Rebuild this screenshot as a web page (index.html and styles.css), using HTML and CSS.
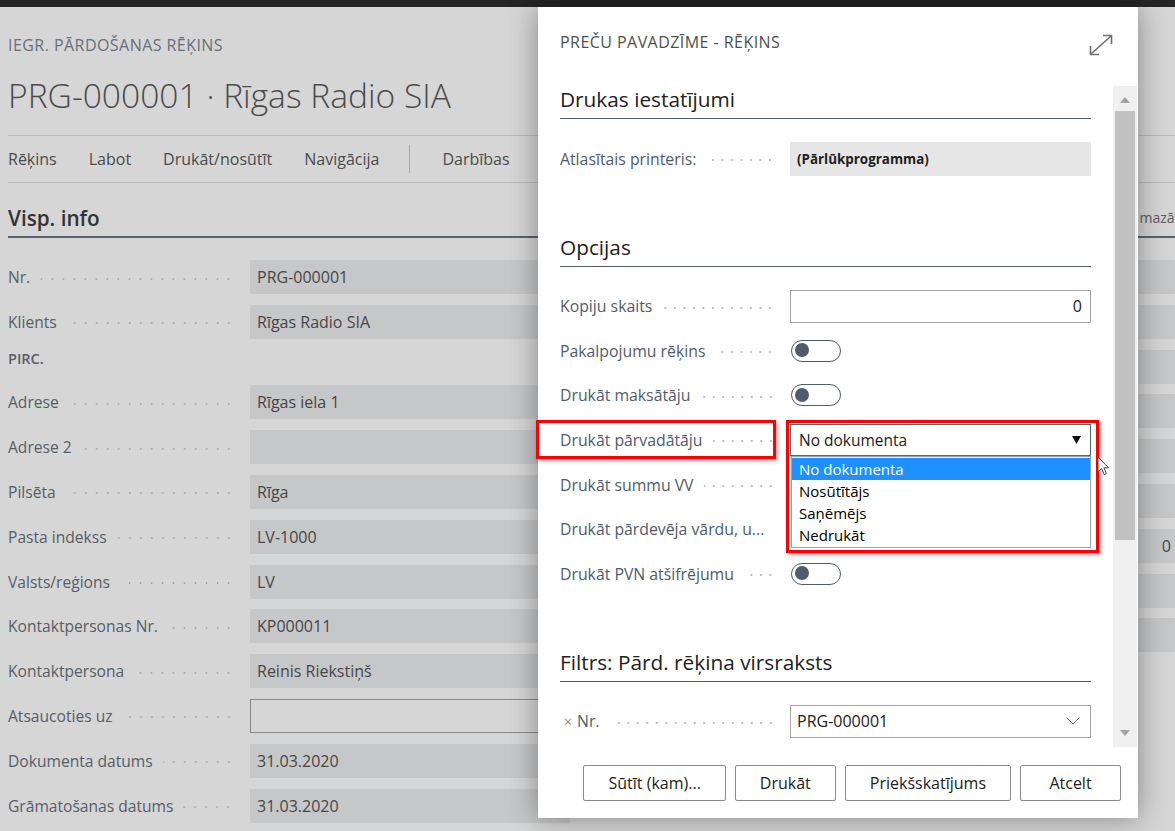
FILE: index.html
```html
<!DOCTYPE html>
<html lang="lv">
<head>
<meta charset="utf-8">
<title>Preču pavadzīme - rēķins</title>
<link rel="stylesheet" href="styles.css">
</head>
<body>
<div class="topbar"></div>
<main class="page">
  <div class="page-caption">IEGR. PĀRDOŠANAS RĒĶINS</div>
  <h1 class="page-title">PRG-000001 · Rīgas Radio SIA</h1>
  <nav class="menu">
    <span class="menu-item">Rēķins</span>
    <span class="menu-item">Labot</span>
    <span class="menu-item">Drukāt/nosūtīt</span>
    <span class="menu-item">Navigācija</span>
    <span class="menu-sep"></span>
    <span class="menu-item">Darbības</span>
  </nav>
  <section class="fasttab">
    <div class="fasttab-head">
      <h2 class="fasttab-title">Visp. info</h2>
      <span class="show-less">Rādīt mazāk</span>
    </div>
    <div class="fasttab-body">
      <div class="col">
        <div class="frow"><span class="flabel"><span>Nr.</span><i class="fdots"></i></span><span class="fval">PRG-000001</span></div>
        <div class="frow"><span class="flabel"><span>Klients</span><i class="fdots"></i></span><span class="fval">Rīgas Radio SIA</span></div>
        <div class="fcaption">PIRC.</div>
        <div class="frow"><span class="flabel"><span>Adrese</span><i class="fdots"></i></span><span class="fval">Rīgas iela 1</span></div>
        <div class="frow"><span class="flabel"><span>Adrese 2</span><i class="fdots"></i></span><span class="fval"></span></div>
        <div class="frow"><span class="flabel"><span>Pilsēta</span><i class="fdots"></i></span><span class="fval">Rīga</span></div>
        <div class="frow"><span class="flabel"><span>Pasta indekss</span><i class="fdots"></i></span><span class="fval">LV-1000</span></div>
        <div class="frow"><span class="flabel"><span>Valsts/reģions</span><i class="fdots"></i></span><span class="fval">LV</span></div>
        <div class="frow"><span class="flabel"><span>Kontaktpersonas Nr.</span><i class="fdots"></i></span><span class="fval">KP000011</span></div>
        <div class="frow"><span class="flabel"><span>Kontaktpersona</span><i class="fdots"></i></span><span class="fval">Reinis Riekstiņš</span></div>
        <div class="frow"><span class="flabel"><span>Atsaucoties uz</span><i class="fdots"></i></span><span class="fval fval-edit"></span></div>
        <div class="frow"><span class="flabel"><span>Dokumenta datums</span><i class="fdots"></i></span><span class="fval">31.03.2020</span></div>
        <div class="frow"><span class="flabel"><span>Grāmatošanas datums</span><i class="fdots"></i></span><span class="fval">31.03.2020</span></div>
      </div>
      <div class="col col-right">
        <div class="frow"><span class="fval"></span></div>
        <div class="frow"><span class="fval"></span></div>
        <div class="frow"><span class="fval"></span></div>
        <div class="frow"><span class="fval"></span></div>
        <div class="frow"><span class="fval"></span></div>
        <div class="frow"><span class="fval"></span></div>
        <div class="frow"><span class="fval fval-num">0</span></div>
        <div class="frow"><span class="fval"></span></div>
        <div class="frow"><span class="fval"></span></div>
      </div>
    </div>
  </section>
</main>

<div class="overlay"></div>

<div class="dialog">
  <div class="dlg-head">
    <div class="dlg-title">PREČU PAVADZĪME - RĒĶINS</div>
    <svg class="expand" width="26" height="24" viewBox="0 0 26 24" aria-hidden="true">
      <path d="M3 21 L23 3" />
      <path d="M15 2.5 L23.5 2.5 L23.5 11" />
      <path d="M2.5 13 L2.5 21.5 L11 21.5" />
    </svg>
  </div>
  <div class="dlg-body">
    <div class="dlg-content">
      <section class="dsec dsec-first">
        <h3 class="dsec-title">Drukas iestatījumi</h3>
        <div class="drows">
          <div class="drow">
            <span class="dlabel"><span class="dtext">Atlasītais printeris:</span><i class="ddots"></i></span>
            <span class="dfield dfield-static">(Pārlūkprogramma)</span>
          </div>
        </div>
      </section>
      <section class="dsec">
        <h3 class="dsec-title">Opcijas</h3>
        <div class="drows">
          <div class="drow">
            <span class="dlabel"><span class="dtext">Kopiju skaits</span><i class="ddots"></i></span>
            <span class="dfield dfield-input">0</span>
          </div>
          <div class="drow">
            <span class="dlabel"><span class="dtext">Pakalpojumu rēķins</span><i class="ddots"></i></span>
            <span class="toggle"></span>
          </div>
          <div class="drow">
            <span class="dlabel"><span class="dtext">Drukāt maksātāju</span><i class="ddots"></i></span>
            <span class="toggle"></span>
          </div>
          <div class="drow drow-open">
            <span class="dlabel"><span class="dtext">Drukāt pārvadātāju</span><i class="ddots"></i></span>
            <span class="dselect">
              <span>No dokumenta</span>
              <svg class="dselect-arrow" width="9" height="8" viewBox="0 0 9 8"><path d="M0 0 H9 L4.5 8 Z"/></svg>
            </span>
            <ul class="dlist">
              <li class="dopt dopt-active">No dokumenta</li>
              <li class="dopt">Nosūtītājs</li>
              <li class="dopt">Saņēmējs</li>
              <li class="dopt">Nedrukāt</li>
            </ul>
          </div>
          <div class="drow">
            <span class="dlabel"><span class="dtext">Drukāt summu VV</span><i class="ddots"></i></span>
            <span class="toggle"></span>
          </div>
          <div class="drow">
            <span class="dlabel"><span class="dtext">Drukāt pārdevēja vārdu, u...</span><i class="ddots"></i></span>
            <span class="toggle"></span>
          </div>
          <div class="drow">
            <span class="dlabel"><span class="dtext">Drukāt PVN atšifrējumu</span><i class="ddots"></i></span>
            <span class="toggle"></span>
          </div>
        </div>
      </section>
      <section class="dsec">
        <h3 class="dsec-title">Filtrs: Pārd. rēķina virsraksts</h3>
        <div class="drows">
          <div class="drow">
            <span class="dlabel"><span class="dx">×</span><span class="dtext">Nr.</span><i class="ddots"></i></span>
            <span class="dfield dfield-input dfield-combo">
              <span>PRG-000001</span>
              <svg class="chev" width="14" height="8" viewBox="0 0 14 8"><path d="M0.5 0.5 L7 7 L13.5 0.5"/></svg>
            </span>
          </div>
        </div>
      </section>
    </div>
    <div class="scrollbar">
      <svg class="sb-arrow" width="10" height="6" viewBox="0 0 10 6"><path d="M0 6 L5 0 L10 6 Z"/></svg>
      <div class="sb-thumb"></div>
      <div class="sb-rest"></div>
      <svg class="sb-arrow" width="10" height="6" viewBox="0 0 10 6"><path d="M0 0 L10 0 L5 6 Z"/></svg>
    </div>
  </div>
  <div class="dlg-foot">
    <button class="btn">Sūtīt (kam)...</button>
    <button class="btn">Drukāt</button>
    <button class="btn">Priekšskatījums</button>
    <button class="btn">Atcelt</button>
  </div>
</div>

<div class="mark mark-label"></div>
<div class="mark mark-select"></div>
<svg class="cursor" width="13" height="21" viewBox="0 0 13 21" aria-hidden="true">
  <path d="M1 1 L1 16 L4.6 12.6 L7.2 18.6 L9.4 17.6 L6.9 11.8 L11.6 11.8 Z"/>
</svg>
</body>
</html>
```

FILE: styles.css
```css
* { box-sizing: border-box; }
html, body { margin: 0; }
body {
  width: 1175px;
  height: 831px;
  overflow: hidden;
  position: relative;
  background: #fff;
  font-family: "Segoe UI", "Open Sans", "Noto Sans", sans-serif;
  color: #212121;
}

/* ---------- background page ---------- */
.topbar { height: 7px; background: #2d2d2d; }
.page { width: 1204px; padding-left: 8px; }
.page-caption {
  margin-top: 28px;
  height: 20px;
  line-height: 20px;
  font-size: 16px;
  letter-spacing: 0.45px;
  color: #7b8594;
}
.page-title {
  margin: 18px 0 0;
  height: 44px;
  line-height: 44px;
  font-size: 33.6px;
  font-weight: 300;
  color: #5a5a5a;
}
.menu {
  margin-top: 18px;
  height: 48px;
  border-top: 1px solid #e1e1e1;
  border-bottom: 1px solid #e1e1e1;
  display: flex;
  align-items: center;
  gap: 32px;
  font-size: 16px;
  color: #5a5a5a;
}
.menu-sep { width: 1px; height: 28px; background: #c8c8c8; margin: 0 0 0 -2px; }
.fasttab-head {
  display: flex;
  justify-content: space-between;
  align-items: center;
  height: 55px;
  padding-top: 16px;
  border-bottom: 2px solid #6c7584;
}
.fasttab-title { margin: 0; font-size: 20.7px; font-weight: 600; color: #3d3d3d; }
.show-less { font-size: 14px; color: #6a717b; margin-right: 22px; }
.fasttab-body {
  display: grid;
  grid-template-columns: 562px 594px;
  column-gap: 40px;
  padding-top: 22px;
}
.col { display: flex; flex-direction: column; gap: 10.8px; }
.frow { display: flex; align-items: center; height: 34px; }
.flabel {
  flex: 0 0 242px;
  display: flex;
  align-items: center;
  font-size: 15.6px;
  color: #6a717b;
  white-space: nowrap;
}
.fdots {
  flex: 1;
  height: 4px;
  margin: 3px 16px 0 10px;
  background-image: radial-gradient(circle, #c3c3c3 0.8px, transparent 1.2px);
  background-size: 11px 4px;
  background-repeat: repeat-x;
  background-position: right center;
}
.fval {
  flex: 1;
  height: 34px;
  line-height: 34px;
  padding: 0 7px;
  background: #ecedef;
  font-size: 16px;
  color: #555;
}
.fval-edit { background: #fff; border: 1px solid #a6a6a6; }
.fval-num { text-align: right; padding-right: 33px; }
.fcaption {
  height: 25px;
  line-height: 18px;
  font-size: 14.5px;
  font-weight: 600;
  color: #6a6f78;
}
.col-right .frow { padding-left: 242px; }

/* ---------- overlay ---------- */
.overlay {
  position: absolute;
  inset: 0;
  background: rgba(0, 0, 0, 0.16);
}

/* ---------- dialog ---------- */
.dialog {
  position: absolute;
  left: 538px;
  top: 7px;
  width: 600px;
  height: 811px;
  background: #fff;
  box-shadow: 0 0 28px rgba(0, 0, 0, 0.38);
  display: flex;
  flex-direction: column;
}
.dlg-head {
  height: 79px;
  display: flex;
  justify-content: space-between;
  align-items: flex-start;
  padding: 25px 24px 0 22px;
}
.dlg-title {
  line-height: 20px;
  font-size: 16px;
  letter-spacing: 0.45px;
  color: #505050;
}
.expand { margin-top: 1px; fill: none; stroke: #707070; stroke-width: 1.6; }

.dlg-body { height: 661px; display: flex; }
.dlg-content {
  width: 575px;
  padding: 0 22px;
  overflow: hidden;
}
.dsec { margin-top: 58px; }
.dsec-first { margin-top: 0; }
.dsec-title {
  margin: 0;
  height: 33px;
  line-height: 27px;
  padding-bottom: 5px;
  border-bottom: 1px solid #505c6d;
  font-size: 20.8px;
  font-weight: 400;
  color: #212121;
}
.drows {
  padding-top: 22.5px;
  display: flex;
  flex-direction: column;
  gap: 10.67px;
}
.drow {
  position: relative;
  display: flex;
  align-items: center;
  height: 34px;
  gap: 15px;
}
.dlabel {
  flex: 0 0 215px;
  display: flex;
  align-items: center;
  font-size: 15.8px;
  color: #505c6d;
  white-space: nowrap;
}
.dx { font-size: 14px; color: #8a8a8a; margin: 0 5px 0 4px; }
.ddots {
  flex: 1;
  height: 4px;
  margin: 3px 0 0 10px;
  background-image: radial-gradient(circle, #bdbdbd 0.8px, transparent 1.2px);
  background-size: 9.5px 4px;
  background-repeat: repeat-x;
  background-position: right center;
}
.dfield {
  flex: 1;
  height: 34px;
  display: flex;
  align-items: center;
  padding: 0 7px;
  font-size: 16px;
  color: #212121;
}
.dfield-static { background: #e6e6e6; font-size: 13.4px; font-weight: 700; }
.dfield-input { border: 1px solid #a6a6a6; justify-content: flex-end; padding-right: 8px; height: 33px; }
.dfield-combo { justify-content: space-between; padding-left: 6px; padding-right: 10px; }
.chev { fill: none; stroke: #777; stroke-width: 1; }

.toggle {
  position: relative;
  width: 50px;
  height: 22px;
  margin-left: 1px;
  border: 1.5px solid #505c6d;
  border-radius: 11px;
}
.toggle::before {
  content: "";
  position: absolute;
  left: 3px;
  top: 2.5px;
  width: 14px;
  height: 14px;
  border-radius: 50%;
  background: #505c6d;
}

.dselect {
  flex: 1;
  height: 32px;
  display: flex;
  align-items: center;
  justify-content: space-between;
  padding: 0 9px 0 8px;
  border: 1px solid #3f6f6e;
  font-size: 15.5px;
  color: #212121;
}
.dselect-arrow { fill: #111; }
.dlist {
  position: absolute;
  left: 231px;
  top: 33px;
  width: 300px;
  margin: 0;
  padding: 1px 0;
  list-style: none;
  background: #fff;
  border: 1px solid #8ea4c2;
  z-index: 2;
}
.dopt {
  height: 22px;
  line-height: 22px;
  padding-left: 7px;
  font-size: 15px;
  color: #000;
}
.dopt-active { background: #1e90ff; color: #fff; }

.scrollbar {
  width: 24px;
  background: #f0f0f0;
  display: flex;
  flex-direction: column;
  align-items: center;
  padding: 11px 0 11px;
}
.sb-arrow { flex: none; fill: #a3a3a3; }
.sb-thumb { flex: none; width: 20px; height: 429px; margin-top: 8px; background: #c1c1c1; }
.sb-rest { flex: 1; }

.dlg-foot {
  flex: 1;
  display: flex;
  justify-content: flex-end;
  align-items: flex-start;
  gap: 9px;
  padding: 18px 17px 0 0;
}
.btn {
  height: 36px;
  min-width: 101px;
  padding: 0 24px;
  border: 1px solid #8a8a8a;
  border-radius: 2px;
  background: #fff;
  font-family: inherit;
  font-size: 16px;
  color: #212121;
}

/* ---------- annotation marks ---------- */
.mark {
  position: absolute;
  border: 3px solid #ff0000;
  box-shadow: 2px 2px 4px rgba(0, 0, 0, 0.35);
}
.mark-label { left: 536px; top: 420px; width: 240px; height: 39px; }
.mark-select { left: 786px; top: 420px; width: 313px; height: 133px; }

.cursor {
  position: absolute;
  left: 1097px;
  top: 456px;
  fill: #fff;
  stroke: #444;
  stroke-width: 1;
}
```
